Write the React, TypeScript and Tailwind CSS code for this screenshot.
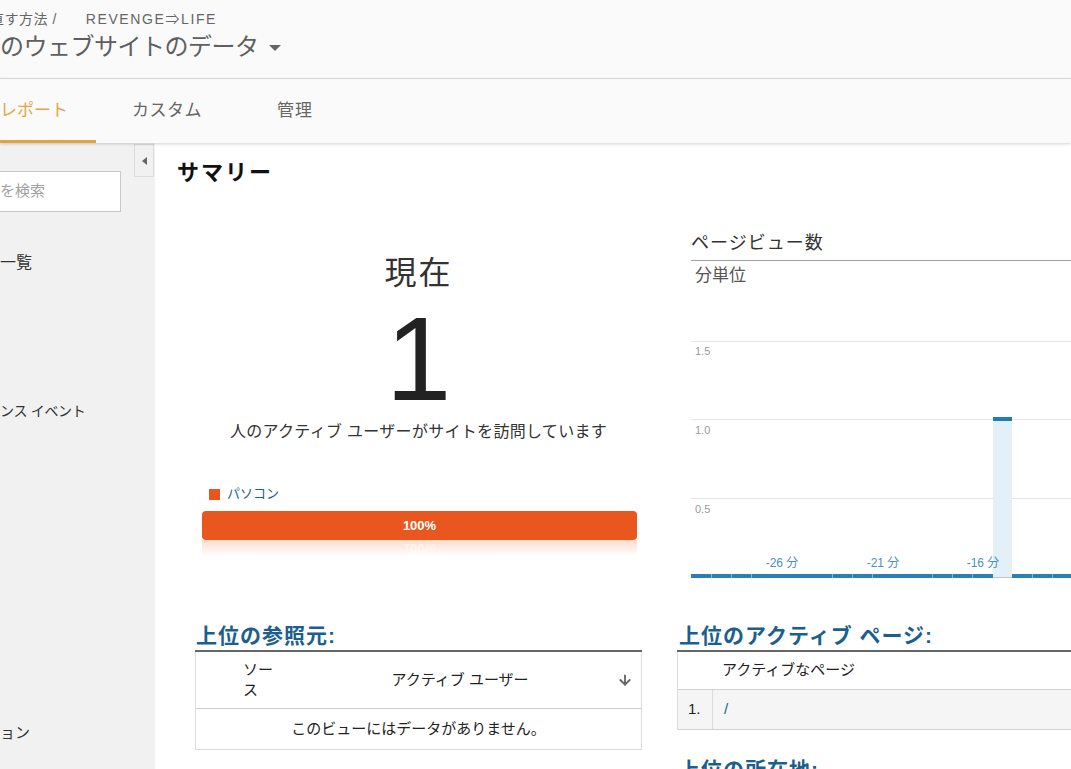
import React from 'react';
import { ArrowDown } from 'lucide-react';

const tickXs = [20, 40, 60, 141, 161, 181, 241, 261, 281, 341, 361, 381];

const xLabels = [
    { x: 91, label: '-26 分' },
    { x: 192, label: '-21 分' },
    { x: 292, label: '-16 分' },
    { x: 398, label: '-11 分' },
];

const yLabels = [
    { y: 25, grid: 11, label: '1.5' },
    { y: 104, grid: 89, label: '1.0' },
    { y: 183, grid: 168, label: '0.5' },
];

function PageViewChart() {
    return (
        <svg width="400" height="260" className="block" style={{ fontFamily: 'Liberation Sans, Noto Sans CJK JP, sans-serif' }}>
            {yLabels.map((g) => (
                <g key={g.label}>
                    <line x1="0" x2="400" y1={g.grid + 0.5} y2={g.grid + 0.5} stroke="#e6e6e6" />
                    <text x="4" y={g.y} fontSize="11" fill="#9a9a9a">{g.label}</text>
                </g>
            ))}
            <rect x="302" y="91" width="19" height="157" fill="#e3f0f8" />
            <rect x="302" y="87" width="19" height="4" fill="#1f7db3" />
            <rect x="0" y="244" width="302" height="4" fill="#2a80b3" />
            <rect x="321" y="244" width="80" height="4" fill="#2a80b3" />
            <line x1="302" x2="321" y1="247.5" y2="247.5" stroke="#c4c4c4" />
            {tickXs.map((x) => (
                <line key={x} x1={x + 0.5} x2={x + 0.5} y1="244" y2="248" stroke="#7fb6d6" />
            ))}
            {xLabels.map((l) => (
                <text key={l.label} x={l.x} y="237" fontSize="12" fill="#4a90bb" textAnchor="middle">{l.label}</text>
            ))}
        </svg>
    );
}

export default function App() {
    return (
        <div className="w-[1071px] h-[769px] overflow-hidden bg-white text-[#333] font-['Liberation_Sans','Noto_Sans_CJK_JP',sans-serif]">
            {/* header */}
            <header className="h-[79px] bg-[#fafafa] border-b border-[#dcdcdc]">
                <div className="pt-[9px] h-[29px] flex items-center text-[14px] leading-[20px] text-[#666]">
                    <span className="ml-[-10px] tracking-[0.5px]">直す方法 /</span>
                    <span className="ml-[29px] tracking-[1.6px]">REVENGE⇒LIFE</span>
                </div>
                <div className="mt-[2px] flex items-center text-[24px] leading-[32px] text-[#5f5f5f]">
                    <span className="tracking-[-0.5px]">のウェブサイトのデータ</span>
                    <span className="ml-[10px] mt-[2px] w-0 h-0 border-l-[6px] border-r-[6px] border-t-[6px] border-l-transparent border-r-transparent border-t-[#666]" />
                </div>
            </header>

            {/* tabs */}
            <nav className="relative z-10 h-[64px] bg-[#fafafa] flex shadow-[0_1px_3px_rgba(0,0,0,0.18)]">
                <div className="w-[96px] border-b-[3px] border-[#e3a23f] pt-[20px] text-[17px] leading-[24px] text-[#e5a543]">レポート</div>
                <div className="ml-[36px] pt-[20px] text-[17px] leading-[24px] text-[#666] tracking-[0.5px]">カスタム</div>
                <div className="ml-[75px] pt-[20px] text-[17px] leading-[24px] text-[#666] tracking-[1px]">管理</div>
            </nav>

            <div className="flex h-[626px]">
                {/* sidebar */}
                <aside className="relative w-[155px] shrink-0 bg-[#f1f1f1] text-[#333]">
                    <div className="absolute right-[1px] top-[1px] w-[20px] h-[33px] border border-[#dcdcdc] flex items-center justify-center">
                        <span className="w-0 h-0 border-t-[4px] border-b-[4px] border-r-[5px] border-t-transparent border-b-transparent border-r-[#666]" />
                    </div>
                    <div className="mt-[28px] ml-[-20px] w-[141px] h-[41px] bg-white border border-[#c8c8c8] flex items-center pl-[19px] text-[15px] text-[#a0a0a0]">
                        を検索
                    </div>
                    <div className="mt-[40px] text-[16px] leading-[22px]">一覧</div>
                    <div className="mt-[126px] text-[14px] leading-[22px] whitespace-nowrap tracking-[-0.3px]">ンス イベント</div>
                    <div className="mt-[300px] text-[15px] leading-[22px]">ョン</div>
                </aside>

                {/* main */}
                <main className="w-[916px] shrink-0">
                    <h1 className="pl-[22px] mt-[18px] text-[22px] leading-[24px] font-bold tracking-[2px] text-[#111]">サマリー</h1>

                    <div className="flex h-[430px]">
                        {/* current users */}
                        <section className="ml-[40px] w-[447px] shrink-0 flex flex-col">
                            <div className="mt-[68px] text-center text-[32px] leading-[40px] tracking-[2px] text-[#333]">現在</div>
                            <div className="mt-[7px] text-center text-[118px] leading-none text-[#222] font-['Liberation_Sans',sans-serif]">1</div>
                            <div className="mt-[3px] text-center text-[16px] leading-[22px] tracking-[0.3px] text-[#333]">人のアクティブ ユーザーがサイトを訪問しています</div>
                            <div className="mt-[42px] ml-[14px] flex items-center gap-[7px] text-[13px] leading-[18px] text-[#1d5f8c]">
                                <span className="w-[11px] h-[11px] bg-[#e9571f]" />
                                <span>パソコン</span>
                            </div>
                            <div className="mt-[8px] ml-[7px] w-[435px] h-[29px] rounded-[4px] bg-[#e9571f] flex items-center justify-center text-white text-[13px] font-bold">
                                100%
                            </div>
                            <div className="ml-[7px] w-[435px] h-[16px] bg-gradient-to-b from-[#fbdccd] to-white flex items-start justify-center overflow-hidden">
                                <span className="-scale-y-100 text-[13px] leading-[16px] font-bold text-white/50">100%</span>
                            </div>
                        </section>

                        {/* page views */}
                        <section className="ml-[35px] w-[460px] shrink-0">
                            <div className="mt-[46px] ml-[14px] pb-[5px] border-b border-[#a0a0a0] text-[18px] leading-[24px] tracking-[1px] text-[#333]">ページビュー数</div>
                            <div className="mt-[5px] ml-[18px] text-[17px] leading-[20px] text-[#555]">分単位</div>
                            <div className="mt-[44px] ml-[14px]">
                                <PageViewChart />
                            </div>
                        </section>
                    </div>

                    <div className="flex">
                        {/* referrers */}
                        <section className="ml-[40px] w-[447px] shrink-0">
                            <h2 className="mt-[9px] pl-[1px] pb-[2px] border-b-2 border-[#666] text-[21px] leading-[24px] font-bold tracking-[1px] text-[#1d5f8c]">上位の参照元:</h2>
                            <div className="border-x border-b border-[#dcdcdc] text-[15px] text-[#222]">
                                <div className="h-[57px] flex items-center border-b border-[#cfcfcf]">
                                    <div className="w-[47px]" />
                                    <div className="w-[32px] leading-[20px]">ソース</div>
                                    <div className="flex-1 pl-[28px] text-center leading-[22px]">アクティブ ユーザー</div>
                                    <div className="w-[24px] flex items-center justify-start text-[#666]">
                                        <ArrowDown size={16} strokeWidth={2.8} />
                                    </div>
                                </div>
                                <div className="h-[40px] flex items-center justify-center">このビューにはデータがありません。</div>
                            </div>
                        </section>

                        {/* active pages */}
                        <section className="ml-[35px] w-[460px] shrink-0">
                            <h2 className="mt-[9px] pl-[2px] pb-[2px] border-b-2 border-[#666] text-[21px] leading-[24px] font-bold tracking-[1px] text-[#1d5f8c]">上位のアクティブ ページ:</h2>
                            <div className="border-l border-[#dcdcdc] text-[15px] text-[#222]">
                                <div className="h-[37px] flex items-center pl-[44px]">アクティブなページ</div>
                                <div className="h-[41px] flex bg-[#f5f5f5] border-y border-[#d0d0d0]">
                                    <div className="w-[35px] pl-[10px] flex items-center border-r border-[#dcdcdc]">1.</div>
                                    <div className="pl-[11px] flex items-center text-[#1d5f8c]">/</div>
                                </div>
                            </div>
                            <h2 className="mt-[28px] pl-[2px] text-[21px] leading-[24px] font-bold tracking-[1px] text-[#1d5f8c]">上位の所在地:</h2>
                        </section>
                    </div>
                </main>
            </div>
        </div>
    );
}
